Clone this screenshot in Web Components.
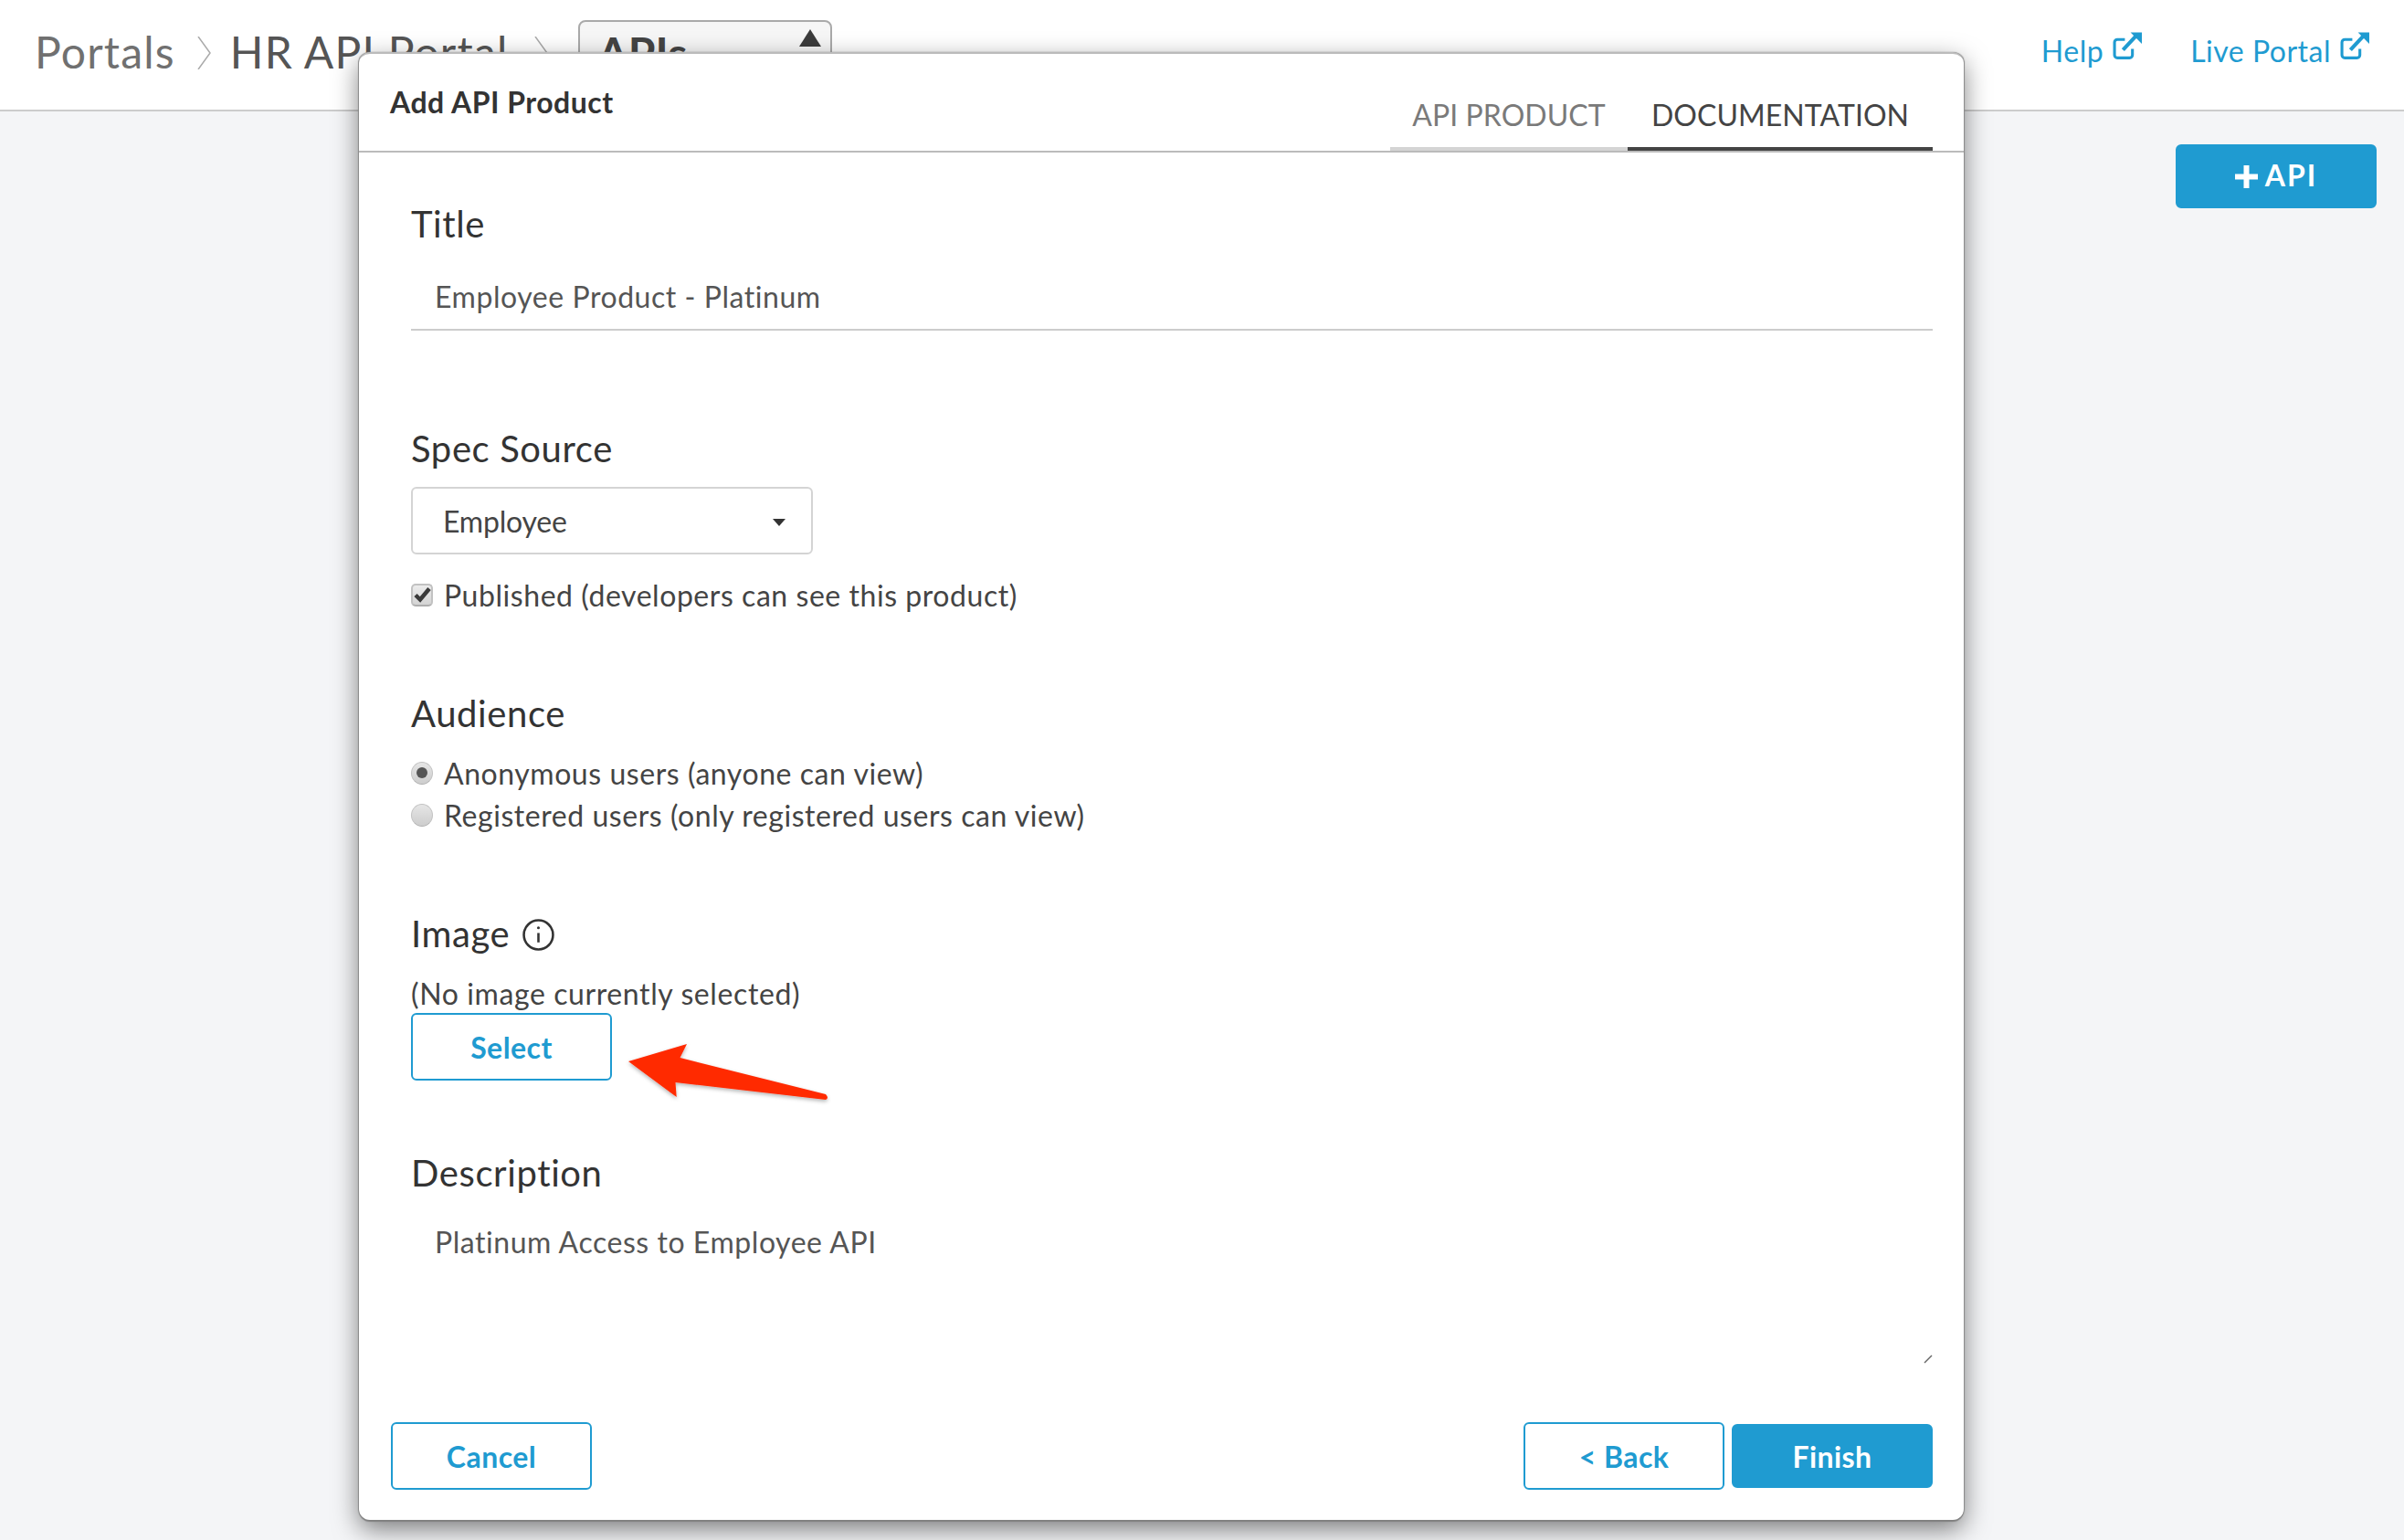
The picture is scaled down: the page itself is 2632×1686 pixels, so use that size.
<!DOCTYPE html>
<html>
<head>
<meta charset="utf-8">
<title>Add API Product</title>
<style>
  html, body { margin: 0; height: 100%; overflow: hidden; background: #f4f5f7; }
  body { font-family: "Lato", "Liberation Sans", sans-serif; color: #333; }
</style>
</head>
<body>
<app-page></app-page>

<template id="ext-icon">
  <svg width="32" height="32" viewBox="1 1 31 31" fill="none" stroke="#1f9bd1" stroke-width="3">
    <path d="M22 19v6.500a3 3 0 0 1-3 3H6a3 3 0 0 1-3-3V12a3 3 0 0 1 3-3h8"/>
    <path d="M12 20 26 5" stroke-width="4"/>
    <path d="M20 1.500h12v12z" fill="#1f9bd1" stroke="none"/>
  </svg>
</template>

<script>
class AppButton extends HTMLElement {
  constructor() {
    super();
    this.attachShadow({ mode: 'open' }).innerHTML = `
    <style>
      :host { display: inline-flex; box-sizing: border-box; align-items: center; justify-content: center;
        width: 220px; height: 74px; border: 2px solid #1f9bd1; border-radius: 6px; background: #fff;
        color: #1f9bd1; font: 700 32px "Lato", sans-serif; letter-spacing: .45px; cursor: pointer; }
      :host([primary]) { background: #1f9bd1; color: #fff; height: 70px; margin: 2px 0; }
    </style>
    <slot></slot>`;
  }
}
customElements.define('app-button', AppButton);

class AppHeader extends HTMLElement {
  constructor() {
    super();
    const icon = document.getElementById('ext-icon').innerHTML;
    this.attachShadow({ mode: 'open' }).innerHTML = `
    <style>
      :host { display: flex; box-sizing: border-box; height: 122px; background: #fff; border-bottom: 2px solid #ccc;
        align-items: flex-start; justify-content: space-between; padding: 0 38px; overflow: hidden; }
      .crumbs { display: flex; align-items: center; font-size: 48px; letter-spacing: 1.2px; color: #707070; height: 112px; }
      .crumbs .cur { color: #555; }
      .sep1 { margin: 4px 21px 0 24px; }
      .sep2 { margin: 4px 33px 0 28px; }
      .apis { box-sizing: border-box; width: 278px; height: 90px; margin: 22px 0 0 0; align-self: flex-start;
        border: 2px solid #aaa; border-radius: 8px; background: #f6f6f6; padding: 5px 20px; position: relative;
        font-weight: 700; font-size: 48px; letter-spacing: 0; color: #444; }
      .apis i { position: absolute; right: 10px; top: 8px; width: 0; height: 0;
        border-left: 12px solid transparent; border-right: 12px solid transparent; border-bottom: 19px solid #3c3c3c; }
      .links { display: flex; gap: 53px; margin-top: 36px; font-size: 32px; letter-spacing: .5px; color: #1f9bd1; }
      .links span { display: flex; gap: 10px; align-items: flex-start; }
      .links svg { margin-top: -1px; }
    </style>
    <div class="crumbs">
      <span>Portals</span>
      <svg class="sep1" width="15" height="36" viewBox="0 0 15 36" fill="none" stroke="#aaa" stroke-width="1.500"><path d="M1 0 14 18 1 36"/></svg>
      <span class="cur">HR API Portal</span>
      <svg class="sep2" width="15" height="36" viewBox="0 0 15 36" fill="none" stroke="#aaa" stroke-width="1.500"><path d="M1 0 14 18 1 36"/></svg>
      <div class="apis">APIs<i></i></div>
    </div>
    <div class="links"><span>Help ${icon}</span><span>Live Portal ${icon}</span></div>`;
  }
}
customElements.define('app-header', AppHeader);

class ModalTabs extends HTMLElement {
  constructor() {
    super();
    this.attachShadow({ mode: 'open' }).innerHTML = `
    <style>
      :host { display: flex; align-self: flex-end; font-size: 32px; letter-spacing: .05px; }
      div { box-sizing: border-box; display: flex; justify-content: center; height: 59px; border-bottom: 4px solid #d4d4d4; color: #7a7a7a; }
      .a { width: 260px; }
      .b { width: 334px; color: #444; border-color: #444; }
    </style>
    <div class="a">API PRODUCT</div><div class="b">DOCUMENTATION</div>`;
  }
}
customElements.define('modal-tabs', ModalTabs);

class FormSection extends HTMLElement {
  constructor() {
    super();
    this.attachShadow({ mode: 'open' }).innerHTML = `
    <style>
      :host { display: block; }
      .label { display: flex; align-items: center; gap: 14px; font-size: 40px; line-height: 48px; color: #333; letter-spacing: .6px; }
    </style>
    <div class="label"><span class="t"></span><slot name="after"></slot></div>
    <slot></slot>`;
  }
  connectedCallback() {
    this.shadowRoot.querySelector('.t').textContent = this.getAttribute('label');
  }
}
customElements.define('form-section', FormSection);

class CheckRow extends HTMLElement {
  constructor() {
    super();
    this.attachShadow({ mode: 'open' }).innerHTML = `
    <style>
      :host { display: flex; align-items: center; gap: 12px; height: 46px; font-size: 32px; color: #444; letter-spacing: .55px; }
      .box { box-sizing: border-box; width: 24px; height: 25px; display: flex; align-items: center; justify-content: center;
        background: linear-gradient(#ececec, #d4d4d4); border: 2px solid #c2c2c2; border-bottom-color: #aeaeae; border-radius: 5px; }
      :host([type=radio]) .box { border-radius: 50%; border-width: 1px; background: linear-gradient(#e6e6e6, #cdcdcd); }
      .dot { width: 12px; height: 12px; border-radius: 50%; background: #555; }
    </style>
    <span class="box"></span><slot></slot>`;
  }
  connectedCallback() {
    const box = this.shadowRoot.querySelector('.box');
    if (!this.hasAttribute('checked')) return;
    box.innerHTML = this.getAttribute('type') === 'radio'
      ? '<span class="dot"></span>'
      : '<svg width="20" height="21" viewBox="2 2 20 21" fill="none" stroke="#3a3a3a" stroke-width="4.500"><path d="M5 12.500 10 17.500 20 5.500"/></svg>';
  }
}
customElements.define('check-row', CheckRow);

class SelectBox extends HTMLElement {
  constructor() {
    super();
    this.attachShadow({ mode: 'open' }).innerHTML = `
    <style>
      :host { display: flex; box-sizing: border-box; width: 440px; height: 74px; align-items: center; justify-content: space-between;
        padding: 0 28px 0 33px; border: 2px solid #d4d4d4; border-radius: 6px; background: #fff; font-size: 32px; color: #444; letter-spacing: -.2px; }
      i { width: 0; height: 0; margin-top: 4px; border-left: 7px solid transparent; border-right: 7px solid transparent; border-top: 8px solid #333; }
    </style>
    <slot></slot><i></i>`;
  }
}
customElements.define('select-box', SelectBox);

class AddProductModal extends HTMLElement {
  constructor() {
    super();
    this.attachShadow({ mode: 'open' }).innerHTML = `
    <style>
      :host { position: absolute; left: 393px; top: 57px; width: 1757px; height: 1607px; box-sizing: border-box;
        display: flex; flex-direction: column; background: #fff; border-radius: 12px;
        border-top: 2px solid #bbb; box-shadow: 0 2px 1px #808080, -1px 0 1px #8c8c8c, 1px 0 1px #8c8c8c, 0 10px 28px rgba(0,0,0,.5); }
      header { display: flex; justify-content: space-between; align-items: flex-start; height: 108px; box-sizing: border-box;
        padding: 0 34px 0 34px; border-bottom: 2px solid #bbb; }
      h2 { margin: 33px 0 0; font-size: 32px; font-weight: 700; color: #333; letter-spacing: .5px; }
      main { flex: 1; display: flex; flex-direction: column; padding: 54px 34px 0 57px; font-size: 32px; color: #444; position: relative; }
      .val { letter-spacing: .55px; color: #555; }
      .title { padding: 36px 26px 0; height: 55px; border-bottom: 2px solid #ccc; }
      .dval { padding: 32px 26px 0; height: 60px; }
      .spec { margin-top: 105px; }
      select-box { margin-top: 18px; }
      check-row.pub { margin-top: 21px; }
      .aud { margin-top: 83px; }
      .aud check-row:first-of-type { margin-top: 18px; }
      .img { margin-top: 83px; }
      .img p { margin: 22px 0 0; height: 41px; letter-spacing: .6px; }
      .desc { margin-top: 77px; }
      .grip { position: absolute; right: 34px; top: 1316px; }
      .arrow { position: absolute; left: -393px; top: -59px; pointer-events: none; overflow: visible; }
      footer { display: flex; align-items: center; padding: 0 34px 33px 35px; gap: 8px; }
      footer .cancel { margin-right: auto; }
      .info { margin-top: 2px; }
    </style>
    <header><h2>Add API Product</h2><modal-tabs></modal-tabs></header>
    <main>
      <form-section label="Title"><div class="val title">Employee Product - Platinum</div></form-section>
      <form-section class="spec" label="Spec Source">
        <select-box>Employee</select-box>
        <check-row class="pub" type="checkbox" checked>Published (developers can see this product)</check-row>
      </form-section>
      <form-section class="aud" label="Audience">
        <check-row type="radio" checked>Anonymous users (anyone can view)</check-row>
        <check-row type="radio">Registered users (only registered users can view)</check-row>
      </form-section>
      <form-section class="img" label="Image">
        <svg slot="after" class="info" width="35" height="35" viewBox="0 0 34 34" fill="none" stroke="#333" stroke-width="2.500">
          <circle cx="17" cy="17" r="15.500"/><path d="M17 15v10"/><circle cx="17" cy="9.500" r="1.500" fill="#333" stroke="none"/>
        </svg>
        <p>(No image currently selected)</p>
        <app-button>Select</app-button>
      </form-section>
      <form-section class="desc" label="Description"><div class="val dval">Platinum Access to Employee API</div></form-section>
      <svg class="grip" width="10" height="10" viewBox="0 0 10 10" stroke="#666" stroke-width="1.500"><path d="M1 9 9 1"/></svg>
    </main>
    <footer>
      <app-button class="cancel">Cancel</app-button>
      <app-button>&lt; Back</app-button>
      <app-button primary>Finish</app-button>
    </footer>
    <svg class="arrow" width="2632" height="1686" viewBox="0 0 2632 1686">
      <defs><filter id="s" x="-10%" y="-20%" width="120%" height="150%"><feDropShadow dx="0" dy="2" stdDeviation="2" flood-color="#000" flood-opacity=".3"/></filter></defs>
      <path d="M688 1162 752 1143 744.500 1158 904 1198Q908 1202 904 1204L739.500 1185 740.700 1201z" fill="#ff2a00" filter="url(#s)"/>
    </svg>`;
  }
}
customElements.define('add-product-modal', AddProductModal);

class AppPage extends HTMLElement {
  constructor() {
    super();
    this.attachShadow({ mode: 'open' }).innerHTML = `
    <style>
      :host { display: flex; flex-direction: column; height: 1686px; position: relative; background: #f4f5f7; overflow: hidden; }
      .bar { display: flex; justify-content: flex-end; padding: 36px 30px 0 0; }
      .add { width: 220px; height: 70px; margin: 0; letter-spacing: 2px; padding-bottom: 3px; }
      svg { margin: 3px 8px 0 0; }
    </style>
    <app-header></app-header>
    <div class="bar"><app-button primary class="add">
      <svg width="25" height="25" viewBox="0 0 25 25" fill="#fff"><path d="M9.500 0h6v9.500H25v6h-9.500V25h-6v-9.500H0v-6h9.500z"/></svg>API</app-button></div>
    <add-product-modal></add-product-modal>`;
  }
}
customElements.define('app-page', AppPage);
</script>
</body>
</html>
